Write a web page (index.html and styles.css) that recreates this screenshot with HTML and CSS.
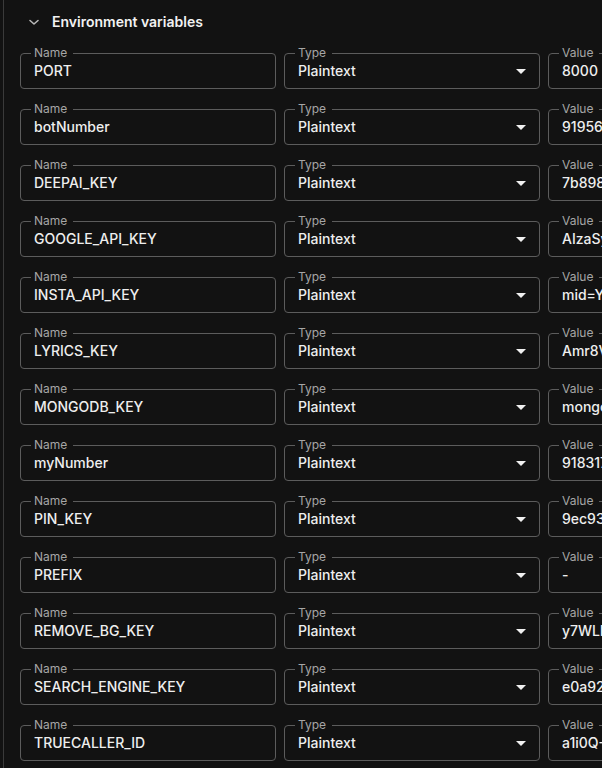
FILE: index.html
```html
<!DOCTYPE html>
<html>
<head>
<meta charset="utf-8">
<link rel="stylesheet" href="styles.css">
</head>
<body>
<div class="panel">
  <div class="header">
    <svg class="chev" width="12" height="12" viewBox="0 0 12 12"><path d="M2 4.5 L6 8 L10 4.5" fill="none" stroke="#b8b8b8" stroke-width="1.6" stroke-linecap="round" stroke-linejoin="round"/></svg>
    <span class="title">Environment variables</span>
  </div>
  <div class="rows">
    <div class="row"><fieldset class="field"><legend>Name</legend><div class="val">PORT</div></fieldset><fieldset class="field"><legend>Type</legend><div class="val sel">Plaintext<span class="tri"></span></div></fieldset><fieldset class="field"><legend>Value</legend><div class="val">8000</div></fieldset></div>
    <div class="row"><fieldset class="field"><legend>Name</legend><div class="val">botNumber</div></fieldset><fieldset class="field"><legend>Type</legend><div class="val sel">Plaintext<span class="tri"></span></div></fieldset><fieldset class="field"><legend>Value</legend><div class="val">919562234812</div></fieldset></div>
    <div class="row"><fieldset class="field"><legend>Name</legend><div class="val">DEEPAI_KEY</div></fieldset><fieldset class="field"><legend>Type</legend><div class="val sel">Plaintext<span class="tri"></span></div></fieldset><fieldset class="field"><legend>Value</legend><div class="val">7b8982e1-5c3a</div></fieldset></div>
    <div class="row"><fieldset class="field"><legend>Name</legend><div class="val">GOOGLE_API_KEY</div></fieldset><fieldset class="field"><legend>Type</legend><div class="val sel">Plaintext<span class="tri"></span></div></fieldset><fieldset class="field"><legend>Value</legend><div class="val">AIzaSyD3kq</div></fieldset></div>
    <div class="row"><fieldset class="field"><legend>Name</legend><div class="val">INSTA_API_KEY</div></fieldset><fieldset class="field"><legend>Type</legend><div class="val sel">Plaintext<span class="tri"></span></div></fieldset><fieldset class="field"><legend>Value</legend><div class="val">mid=YkP2wA</div></fieldset></div>
    <div class="row"><fieldset class="field"><legend>Name</legend><div class="val">LYRICS_KEY</div></fieldset><fieldset class="field"><legend>Type</legend><div class="val sel">Plaintext<span class="tri"></span></div></fieldset><fieldset class="field"><legend>Value</legend><div class="val">Amr8VxQ2</div></fieldset></div>
    <div class="row"><fieldset class="field"><legend>Name</legend><div class="val">MONGODB_KEY</div></fieldset><fieldset class="field"><legend>Type</legend><div class="val sel">Plaintext<span class="tri"></span></div></fieldset><fieldset class="field"><legend>Value</legend><div class="val">mongodb+srv</div></fieldset></div>
    <div class="row"><fieldset class="field"><legend>Name</legend><div class="val">myNumber</div></fieldset><fieldset class="field"><legend>Type</legend><div class="val sel">Plaintext<span class="tri"></span></div></fieldset><fieldset class="field"><legend>Value</legend><div class="val">918317429</div></fieldset></div>
    <div class="row"><fieldset class="field"><legend>Name</legend><div class="val">PIN_KEY</div></fieldset><fieldset class="field"><legend>Type</legend><div class="val sel">Plaintext<span class="tri"></span></div></fieldset><fieldset class="field"><legend>Value</legend><div class="val">9ec93a7d</div></fieldset></div>
    <div class="row"><fieldset class="field"><legend>Name</legend><div class="val">PREFIX</div></fieldset><fieldset class="field"><legend>Type</legend><div class="val sel">Plaintext<span class="tri"></span></div></fieldset><fieldset class="field"><legend>Value</legend><div class="val">-</div></fieldset></div>
    <div class="row"><fieldset class="field"><legend>Name</legend><div class="val">REMOVE_BG_KEY</div></fieldset><fieldset class="field"><legend>Type</legend><div class="val sel">Plaintext<span class="tri"></span></div></fieldset><fieldset class="field"><legend>Value</legend><div class="val">y7WLkH</div></fieldset></div>
    <div class="row"><fieldset class="field"><legend>Name</legend><div class="val">SEARCH_ENGINE_KEY</div></fieldset><fieldset class="field"><legend>Type</legend><div class="val sel">Plaintext<span class="tri"></span></div></fieldset><fieldset class="field"><legend>Value</legend><div class="val">e0a92f1b</div></fieldset></div>
    <div class="row"><fieldset class="field"><legend>Name</legend><div class="val">TRUECALLER_ID</div></fieldset><fieldset class="field"><legend>Type</legend><div class="val sel">Plaintext<span class="tri"></span></div></fieldset><fieldset class="field"><legend>Value</legend><div class="val">a1i0Q-7xk</div></fieldset></div>
  </div>
</div>
</body>
</html>
```

FILE: styles.css
```css
html, body {
  margin: 0;
  padding: 0;
  background: #121212;
  overflow: hidden;
  height: 768px;
}
body {
  font-family: Inter, "Noto Sans", "Liberation Sans", sans-serif;
  color: #ededed;
}
.panel {
  margin-left: 3px;
  border-left: 1px solid #3a3a3a;
  padding-left: 16px;
  min-height: 768px;
  box-sizing: border-box;
}
.header {
  height: 42px;
  display: flex;
  align-items: center;
  gap: 12px;
  padding-left: 8px;
}
.chev {
  display: block;
  width: 12px;
  height: 12px;
  margin-top: 1px;
}
.title {
  font-size: 14px;
  font-weight: 600;
  color: #f2f2f2;
  line-height: 18px;
  margin-top: 2px;
}
.rows {
  margin-top: 4px;
  display: flex;
  flex-direction: column;
  gap: 13px;
}
.row {
  display: grid;
  grid-template-columns: 256px 256px 256px;
  column-gap: 8px;
}
.field {
  margin: 0;
  padding: 1px 13px 7px 13px;
  border: 1px solid #5c5c5c;
  border-radius: 4px;
  min-width: 0;
  box-sizing: border-box;
}
.field legend {
  font-size: 12px;
  line-height: 14px;
  color: #a6a6a6;
  padding: 0 6px 0 3px;
  margin-left: -3px;
}
.val {
  font-size: 14px;
  line-height: 20px;
  font-weight: 500;
  color: #eeeeee;
  white-space: nowrap;
}
.sel {
  display: flex;
  align-items: center;
  justify-content: space-between;
}
.tri {
  width: 0;
  height: 0;
  border-left: 5px solid transparent;
  border-right: 5px solid transparent;
  border-top: 5px solid #f0f0f0;
}
```
